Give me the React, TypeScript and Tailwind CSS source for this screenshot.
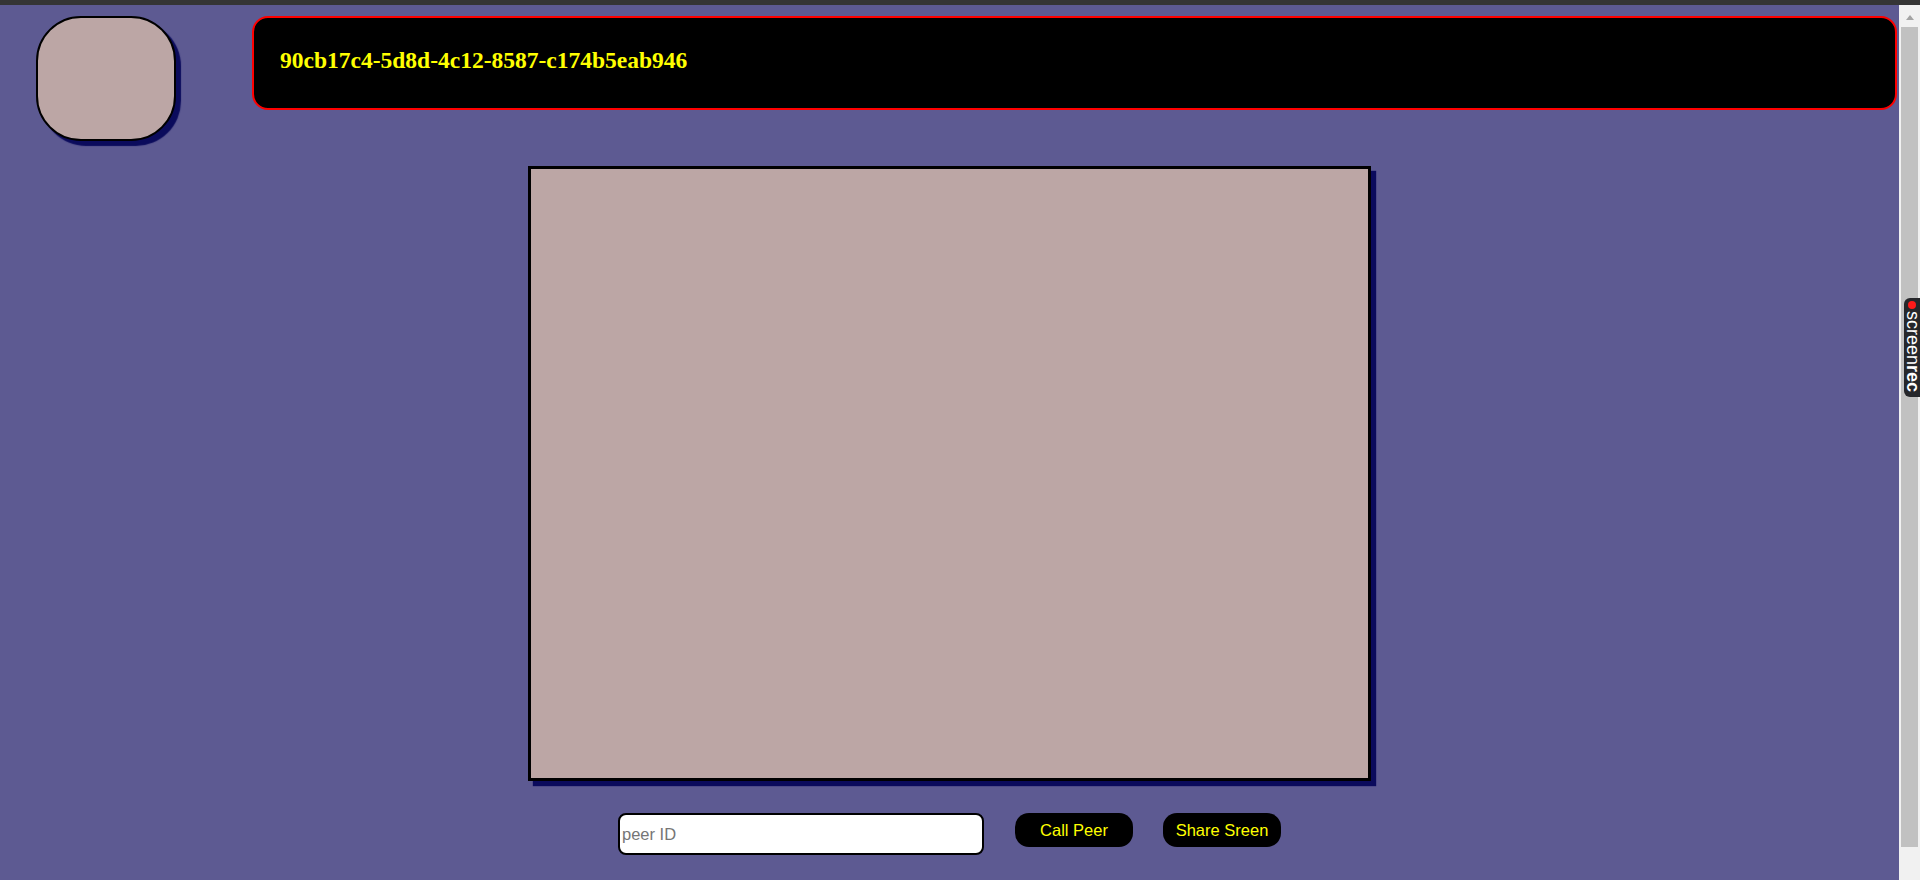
export default function App() {
  return (
    <div className="relative w-[1920px] h-[880px] overflow-hidden flex flex-col bg-[#5d5a92]">
      <div className="h-[5px] w-full bg-[#353535]" />
      <div className="flex flex-1">
        <main className="flex-1 flex flex-col">
          {/* top: avatar + peer id */}
          <div className="flex items-start pt-[11px]">
            <div className="ml-[36px] w-[140px] h-[125px] rounded-[45px] border-2 border-black bg-[#bca6a5] shadow-[5px_5px_1px_#0b0b5c]" />
            <div className="ml-[76px] mr-[2px] flex-1 h-[94px] rounded-[16px] border-2 border-[#ff0000] bg-black pl-[26px] pt-[28px]">
              <h2 className="font-['Liberation_Serif',serif] text-[23.5px] leading-[28px] font-bold text-[#ffff00]">
                90cb17c4-5d8d-4c12-8587-c174b5eab946
              </h2>
            </div>
          </div>

          {/* video */}
          <div className="mt-[25px] ml-[528px] w-[843px] h-[615px] border-[3px] border-black bg-[#bca6a5] shadow-[5px_5px_1px_#0b0b5c]" />

          {/* controls */}
          <div className="flex items-start mt-[32px] ml-[618px] font-['Liberation_Sans',Arial,sans-serif]">
            <input
              placeholder="peer ID"
              className="w-[366px] h-[42px] rounded-[8px] border-2 border-black bg-white pl-[2px] text-[16.5px] text-black placeholder:text-[#757575] outline-none"
            />
            <button className="ml-[31px] w-[118px] h-[34px] rounded-[14px] bg-black text-[#ffff00] text-[16.5px] flex items-center justify-center">
              Call Peer
            </button>
            <button className="ml-[30px] w-[118px] h-[34px] rounded-[14px] bg-black text-[#ffff00] text-[16.5px] flex items-center justify-center">
              Share Sreen
            </button>
          </div>
        </main>

        {/* scrollbar */}
        <div className="w-[21px] bg-[#f1f1f1] flex flex-col">
          <div className="h-[22px] flex justify-center pt-[10px]">
            <div className="w-0 h-0 border-l-[4px] border-r-[4px] border-b-[5px] border-l-transparent border-r-transparent border-b-[#a3a3a3]" />
          </div>
          <div className="mx-[2px] h-[820px] bg-[#c1c1c1]" />
        </div>
      </div>

      {/* screenrec tab */}
      <div className="absolute right-0 top-[298px] w-[16px] h-[99px] rounded-l-[6px] bg-[#26272b] flex flex-col items-center pt-[3px] overflow-hidden">
        <div className="w-[8px] h-[8px] rounded-full bg-[#ff1a1a]" />
        <div className="mt-[2px] [writing-mode:vertical-rl] font-['Liberation_Sans',Arial,sans-serif] text-[18px] leading-[15px] text-white">
          screen<span className="font-bold">rec</span>
        </div>
      </div>
    </div>
  );
}
